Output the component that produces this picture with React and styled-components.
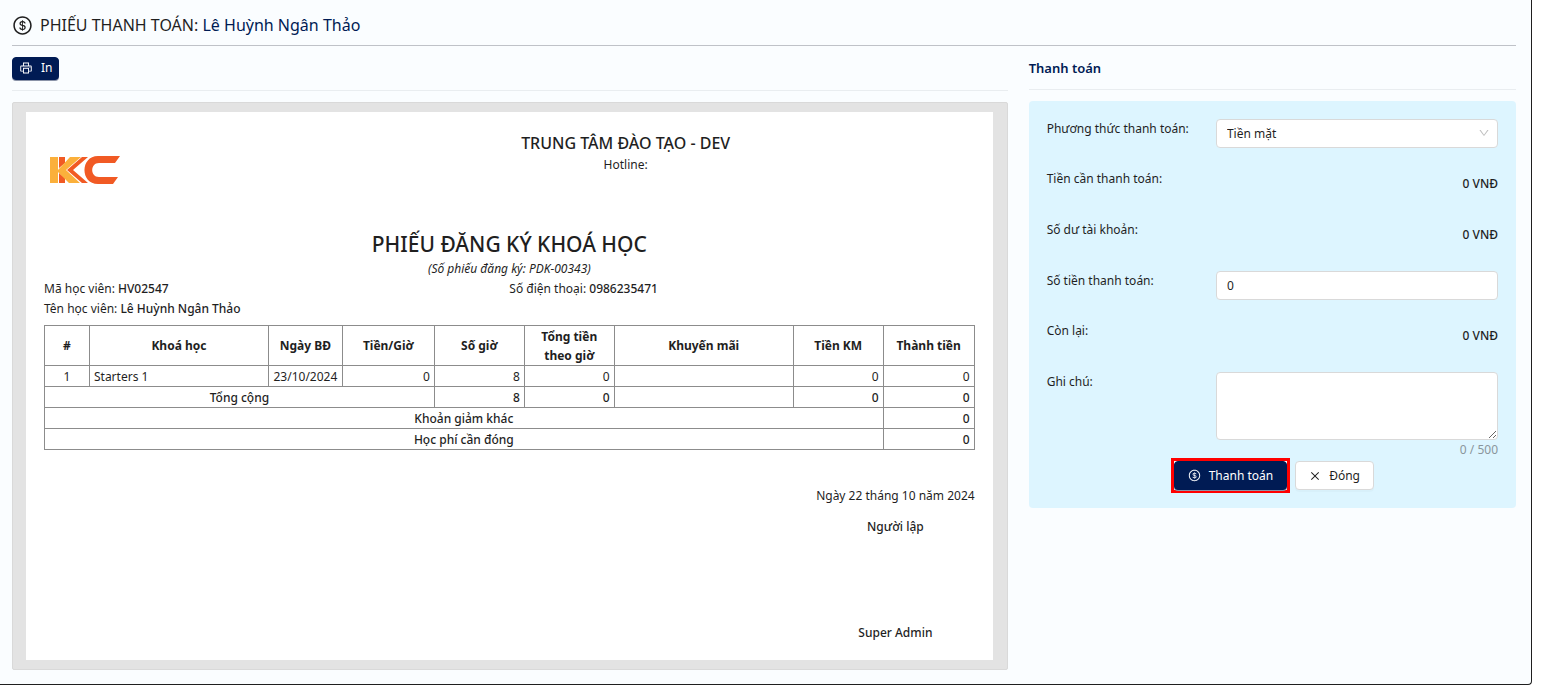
import React, { useState } from "react"
import styled, { createGlobalStyle, css } from "styled-components"
import {
  AiOutlineClose,
  AiOutlineDollar,
  AiOutlineDown,
  AiOutlinePrinter,
} from "react-icons/ai"

const items = [
  {
    name: "Starters 1",
    date: "23/10/2024",
    price: 0,
    hours: 8,
    total: 0,
    promo: "",
    discount: 0,
    amount: 0,
  },
]

const App = () => {
  const [method, setMethod] = useState("cash")
  const [amount, setAmount] = useState("0")
  const [note, setNote] = useState("")

  return (
    <>
      <GlobalStyle />
      <Modal>
        <Header>
          <AiOutlineDollar size={21} />
          <Title>
            PHIẾU THANH TOÁN: <Name>Lê Huỳnh Ngân Thảo</Name>
          </Title>
        </Header>
        <Columns>
          <Column $span={16}>
            <Toolbar $height={45}>
              <Button $primary $small type="button">
                <AiOutlinePrinter size={14} />
                In
              </Button>
            </Toolbar>
            <Preview>
              <Receipt />
            </Preview>
          </Column>
          <Column $span={8}>
            <Toolbar $height={44}>
              <Subtitle>Thanh toán</Subtitle>
            </Toolbar>
            <Form onSubmit={e => e.preventDefault()}>
              <Row>
                <Label htmlFor="method">Phương thức thanh toán:</Label>
                <SelectWrap>
                  <Select
                    id="method"
                    value={method}
                    onChange={e => setMethod(e.target.value)}
                  >
                    <option value="cash">Tiền mặt</option>
                  </Select>
                  <AiOutlineDown size={12} />
                </SelectWrap>
              </Row>
              <Row>
                <Label as="span">Tiền cần thanh toán:</Label>
                <Value>0 VNĐ</Value>
              </Row>
              <Row>
                <Label as="span">Số dư tài khoản:</Label>
                <Value>0 VNĐ</Value>
              </Row>
              <Row>
                <Label htmlFor="amount">Số tiền thanh toán:</Label>
                <Input
                  id="amount"
                  value={amount}
                  onChange={e => setAmount(e.target.value)}
                />
              </Row>
              <Row>
                <Label as="span">Còn lại:</Label>
                <Value>0 VNĐ</Value>
              </Row>
              <Row>
                <Label htmlFor="note">Ghi chú:</Label>
                <div>
                  <Textarea
                    id="note"
                    maxLength={500}
                    value={note}
                    onChange={e => setNote(e.target.value)}
                  />
                  <Count>{note.length} / 500</Count>
                </div>
              </Row>
              <Actions>
                <Marker>
                  <Button $primary type="submit">
                    <AiOutlineDollar size={13} />
                    Thanh toán
                  </Button>
                </Marker>
                <Button type="button">
                  <AiOutlineClose size={12} />
                  Đóng
                </Button>
              </Actions>
            </Form>
          </Column>
        </Columns>
      </Modal>
    </>
  )
}

const Logo = () => (
  <svg width="72" height="32" viewBox="0 0 72 32" role="img" aria-label="KC">
    <path fill="#f15a24" d="M11 3h6v6l-6 5zM11 19l6 5v5h-6z" />
    <path fill="#fbb03b" d="M2 3h8v13L22 3h11L18 16l14 13H21L10 18v11H2z" />
    <path fill="#f15a24" d="M34 3h6L25 16l15 13h-6L19 16z" />
    <path
      fill="#f15a24"
      d="M50 2h22l-5 7H51c-9 0-9 14 0 14h19l-5 7H50C32 30 32 2 50 2z"
    />
  </svg>
)

const Receipt = () => (
  <Paper>
    <Letterhead>
      <Logo />
      <Center>
        <Company>TRUNG TÂM ĐÀO TẠO - DEV</Company>
        <div>Hotline:</div>
      </Center>
    </Letterhead>
    <Center>
      <Heading>PHIẾU ĐĂNG KÝ KHOÁ HỌC</Heading>
      <em>(Số phiếu đăng ký: PDK-00343)</em>
    </Center>
    <Student>
      <div>
        Mã học viên: <b>HV02547</b>
      </div>
      <div>
        Số điện thoại: <b>0986235471</b>
      </div>
      <div>
        Tên học viên: <b>Lê Huỳnh Ngân Thảo</b>
      </div>
    </Student>
    <Table>
      <colgroup>
        <Col $w={45} />
        <Col $w={179} />
        <Col $w={74} />
        <Col $w={92} />
        <Col $w={90} />
        <Col $w={90} />
        <Col $w={179} />
        <Col $w={90} />
        <Col $w={91} />
      </colgroup>
      <thead>
        <tr>
          <Th>#</Th>
          <Th>Khoá học</Th>
          <Th>Ngày BĐ</Th>
          <Th>Tiền/Giờ</Th>
          <Th>Số giờ</Th>
          <Th>
            Tổng tiền
            <br />
            theo giờ
          </Th>
          <Th>Khuyến mãi</Th>
          <Th>Tiền KM</Th>
          <Th>Thành tiền</Th>
        </tr>
      </thead>
      <tbody>
        {items.map((item, i) => (
          <tr key={i}>
            <Td $align="center">{i + 1}</Td>
            <Td $align="left">{item.name}</Td>
            <Td $align="center">{item.date}</Td>
            <Td>{item.price}</Td>
            <Td>{item.hours}</Td>
            <Td>{item.total}</Td>
            <Td>{item.promo}</Td>
            <Td>{item.discount}</Td>
            <Td>{item.amount}</Td>
          </tr>
        ))}
        <tr>
          <Td $strong $align="center" colSpan={4}>
            Tổng cộng
          </Td>
          <Td $strong>8</Td>
          <Td $strong>0</Td>
          <Td />
          <Td $strong>0</Td>
          <Td $strong>0</Td>
        </tr>
        <tr>
          <Td $strong $align="center" colSpan={8}>
            Khoản giảm khác
          </Td>
          <Td $strong>0</Td>
        </tr>
        <tr>
          <Td $strong $align="center" colSpan={8}>
            Học phí cần đóng
          </Td>
          <Td $strong>0</Td>
        </tr>
      </tbody>
    </Table>
    <Signature>
      <div>Ngày 22 tháng 10 năm 2024</div>
      <b>Người lập</b>
      <Signer>Super Admin</Signer>
    </Signature>
  </Paper>
)

const GlobalStyle = createGlobalStyle`
  *, *::before, *::after {
    box-sizing: border-box;
  }
  body {
    margin: 0;
    background: #fff;
    color: #1f1f1f;
    font-family: "Noto Sans", "Open Sans", sans-serif;
    font-size: 12px;
    line-height: 20px;
  }
  b {
    font-weight: 500;
  }
`
const Modal = styled.main`
  margin-right: 9px;
  padding: 5px 15px 14px 12px;
  background: #fafdff;
  border: solid #1f1f1f;
  border-width: 0 1px 1px 0;
  border-bottom-right-radius: 4px;
`
const Header = styled.header`
  display: flex;
  align-items: center;
  gap: 7px;
  height: 41px;
  border-bottom: 1px solid #bfc2c8;
`
const Title = styled.h1`
  margin: 0;
  font-size: 16px;
  font-weight: 400;
`
const Name = styled.span`
  color: #001b54;
`
const Columns = styled.div`
  display: grid;
  grid-template-columns: repeat(24, minmax(0, 1fr));
  column-gap: 21px;
`
const Column = styled.section`
  grid-column: span ${p => p.$span};
`
const Toolbar = styled.div`
  display: flex;
  align-items: center;
  height: ${p => p.$height}px;
  margin-bottom: 11px;
  border-bottom: 1px solid #e9edf0;
`
const Subtitle = styled.h2`
  margin: 0;
  color: #001b54;
  font-size: 13px;
  font-weight: 600;
`
const Button = styled.button`
  display: inline-flex;
  align-items: center;
  gap: 8px;
  height: 29px;
  padding: 0 13px;
  border: 1px solid #d9d9d9;
  border-radius: 4px;
  background: #fff;
  box-shadow: 0 2px 0 rgba(0, 0, 0, 0.02);
  color: #1f1f1f;
  font: inherit;
  cursor: pointer;
  ${p =>
    p.$primary &&
    css`
      border-color: #001b54;
      background: #001b54;
      box-shadow: 0 1px 0 #8a93a8;
      color: #fff;
    `}
  ${p =>
    p.$small &&
    css`
      height: 23px;
      padding: 0 6px;
    `}
`
const Preview = styled.div`
  padding: 9px 14px 9px 13px;
  border: 1px solid #d9d9d9;
  border-radius: 2px;
  background: #e3e3e3;
`
const Paper = styled.article`
  padding: 20px 18px 17px;
  background: #fff;
`
const Letterhead = styled.div`
  display: grid;
  grid-template-columns: 1fr 3fr;
  height: 98px;

  svg {
    margin: 22px 0 0 4px;
  }
`
const Center = styled.div`
  text-align: center;
`
const Company = styled.div`
  font-size: 16px;
  font-weight: 500;
  line-height: 23px;
`
const Heading = styled.h2`
  margin: 0;
  font-size: 21px;
  font-weight: 500;
  line-height: 29px;
`
const Student = styled.div`
  display: grid;
  grid-template-columns: 1fr 1fr;
  margin-bottom: 6px;
`
const Table = styled.table`
  width: 100%;
  table-layout: fixed;
  border-collapse: collapse;
`
const Col = styled.col`
  width: ${p => (p.$w / 930) * 100}%;
`
const cell = css`
  height: 21px;
  border: 1px solid #8c8c8c;
`
const Th = styled.th`
  ${cell}
  height: 40px;
  padding: 0 4px;
  font-weight: 700;
  line-height: 19px;
`
const Td = styled.td`
  ${cell}
  padding: 2px 4px 0;
  font-weight: ${p => (p.$strong ? 500 : 400)};
  line-height: 18px;
  text-align: ${p => p.$align || "right"};
`
const Signature = styled.div`
  display: flex;
  flex-direction: column;
  gap: 11px;
  width: fit-content;
  margin: 36px 0 0 auto;
  text-align: center;
`
const Signer = styled.b`
  margin-top: 75px;
`
const Form = styled.form`
  display: flex;
  flex-direction: column;
  gap: 21px;
  padding: 18px;
  border-radius: 4px;
  background: #ddf5ff;
`
const Row = styled.div`
  display: grid;
  grid-template-columns: 3fr 5fr;
`
const Label = styled.label``
const Value = styled.span`
  height: 30px;
  padding-top: 5px;
  font-weight: 500;
  text-align: right;
`
const field = css`
  display: block;
  width: 100%;
  height: 29px;
  padding: 0 10px;
  border: 1px solid #d9d9d9;
  border-radius: 4px;
  background: #fff;
  color: #1f1f1f;
  font: inherit;
`
const SelectWrap = styled.div`
  position: relative;

  svg {
    position: absolute;
    top: 8px;
    right: 8px;
    color: #bfbfbf;
    pointer-events: none;
  }
`
const Select = styled.select`
  ${field}
  appearance: none;
`
const Input = styled.input`
  ${field}
`
const Textarea = styled.textarea`
  ${field}
  height: 68px;
  resize: vertical;
`
const Count = styled.div`
  height: 0;
  color: #8a969c;
  text-align: right;
`
const Actions = styled.div`
  display: flex;
  align-items: center;
  justify-content: center;
  gap: 5px;
  margin: -3px 0;
`
const Marker = styled.span`
  display: inline-flex;
  border: 3px solid #f00;
  background: #fff;
`

export default App
